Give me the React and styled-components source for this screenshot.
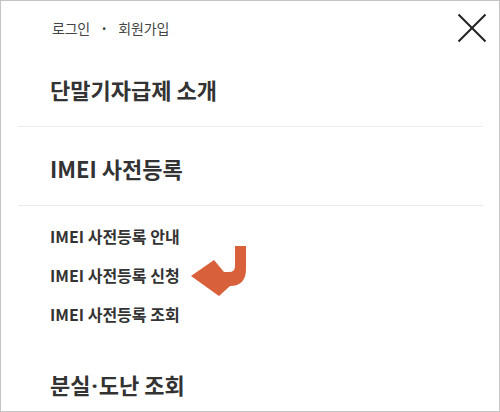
import styled, { createGlobalStyle } from 'styled-components';

const GlobalStyle = createGlobalStyle`
  html, body {
    margin: 0;
    padding: 0;
    background: #fff;
  }
  body {
    font-family: "Noto Sans CJK KR", "Noto Sans", sans-serif;
    color: #333;
  }
`

const menu = [
  { title: '단말기자급제 소개' },
  {
    title: 'IMEI 사전등록',
    items: ['IMEI 사전등록 안내', 'IMEI 사전등록 신청', 'IMEI 사전등록 조회'],
    marked: 1,
  },
  { title: ['분실', '도난 조회'] },
]

const CurveArrow = () => (
  <ArrowSvg width="60" height="54" viewBox="0 0 60 54">
    <path
      d="M47 1 H58 V24 Q58 41 42 41 L31 51 L3 31 L26 15 L36 27 H41 Q47 27 47 21 Z"
      fill="#d8603a"
      strokeLinejoin="round"
    />
  </ArrowSvg>
)

const Title = ({ text }) =>
  Array.isArray(text) ? (
    <>
      {text[0]}
      <MidDot>·</MidDot>
      {text[1]}
    </>
  ) : (
    text
  )

const App = () => {
  return (
    <Frame>
      <GlobalStyle />
      <TopBar>
        <AuthLinks>
          <LinkText>로그인</LinkText>
          <Dot>·</Dot>
          <LinkText>회원가입</LinkText>
        </AuthLinks>
        <CloseButton aria-label="닫기">
          <svg width="30" height="30" viewBox="0 0 30 30">
            <path d="M1.5 1.5 L28.5 28.5 M28.5 1.5 L1.5 28.5" stroke="#222" strokeWidth="2" fill="none" />
          </svg>
        </CloseButton>
      </TopBar>

      {menu.map((section, i) => (
        <Section key={i}>
          {i === 1 && <Divider />}
          <Heading $last={i === menu.length - 1}>
            <Title text={section.title} />
          </Heading>
          {section.items && (
            <>
              <Divider />
              <SubList>
                {section.items.map((item, j) => (
                  <SubItem key={item}>
                    {item}
                    {section.marked === j && <CurveArrow />}
                  </SubItem>
                ))}
              </SubList>
            </>
          )}
        </Section>
      ))}
    </Frame>
  )
}

export default App

const Frame = styled.div`
  box-sizing: border-box;
  width: 500px;
  height: 412px;
  border: 1px solid #c4c4c4;
  overflow: hidden;
  display: flex;
  flex-direction: column;
`
const TopBar = styled.div`
  display: flex;
  flex-direction: row;
  align-items: center;
  justify-content: space-between;

  height: 28px;
  padding: 13px 12px 6px 51px;
`
const AuthLinks = styled.div`
  display: flex;
  align-items: center;
  gap: 10px;

  font-size: 14px;
  color: #444;
`
const LinkText = styled.span`
  letter-spacing: -0.2px;
`
const Dot = styled.span`
  font-weight: 700;
`
const CloseButton = styled.button`
  display: flex;
  align-items: center;
  justify-content: center;

  width: 30px;
  height: 30px;
  padding: 0;

  border: none;
  background: none;
  cursor: pointer;
`
const Section = styled.div`
  display: flex;
  flex-direction: column;
`
const Divider = styled.div`
  height: 1px;
  margin: 0 16px 0 17px;
  background-color: #ececec;
`
const Heading = styled.h2`
  margin: 0;
  padding: ${({ $last }) => ($last ? '35px 0 0 49px' : '26px 0 22px 49px')};

  font-size: 22px;
  line-height: 30px;
  font-weight: 700;
  color: #333;
`
const MidDot = styled.span`
  font-family: "Noto Sans", sans-serif;
  margin: 0 1px;
`
const SubList = styled.ul`
  list-style: none;
  margin: 0;
  padding: 11px 0 0 49px;
`
const SubItem = styled.li`
  position: relative;

  height: 39px;
  line-height: 39px;

  font-size: 16px;
  font-weight: 700;
  color: #333;
`
const ArrowSvg = styled.svg`
  position: absolute;
  left: 138px;
  top: -11px;
`
